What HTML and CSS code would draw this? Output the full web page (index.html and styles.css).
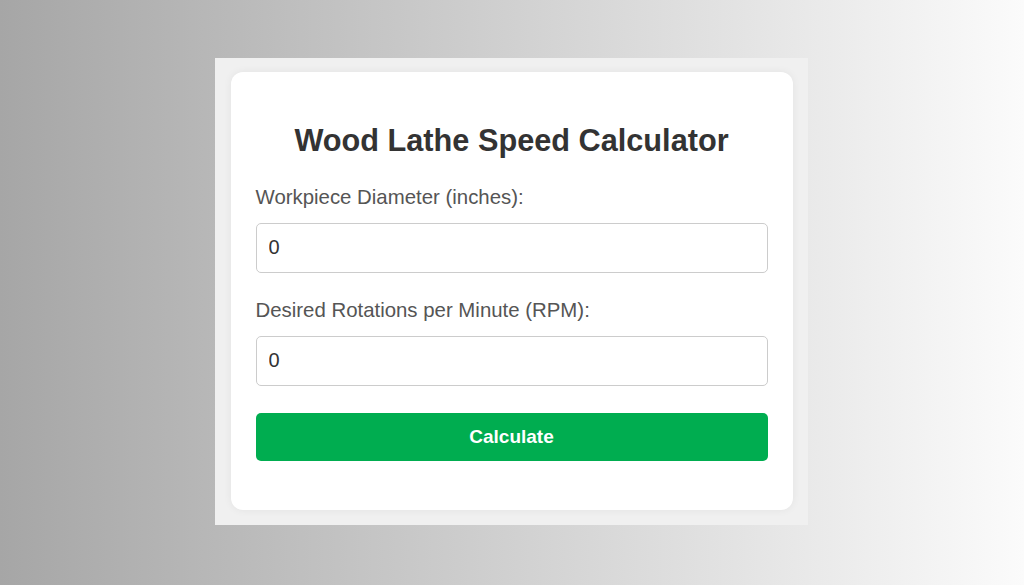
FILE: index.html
```html
<!DOCTYPE html>
<html lang="en">
<head>
    <meta charset="UTF-8">
    <meta name="viewport" content="width=device-width, initial-scale=1.0">
    <title>Wood Lathe Speed Calculator</title>
    <link rel="stylesheet" href="styles.css">
</head>
<body>
<div class="frame">
    <div class="calculator">
        <h1>Wood Lathe Speed Calculator</h1>

        <div class="form-group">
            <label for="diameter">Workpiece Diameter (inches):</label>
            <input type="number" id="diameter" value="0">
        </div>

        <div class="form-group">
            <label for="rpm">Desired Rotations per Minute (RPM):</label>
            <input type="number" id="rpm" value="0">
        </div>

        <button id="calcBtn" class="calc-btn">Calculate</button>
        <div id="result" class="result"></div>
    </div>
</div>

<script>
    document.getElementById('calcBtn').addEventListener('click', () => {
        const diameter = parseFloat(document.getElementById('diameter').value) || 0;
        const rpm = parseFloat(document.getElementById('rpm').value) || 0;
        // surface speed in feet per minute
        const sfm = Math.PI * diameter * rpm / 12;
        document.getElementById('result').textContent = `Surface speed: ${sfm.toFixed(1)} ft/min`;
    });
</script>
</body>
</html>
```

FILE: styles.css
```css
html, body {
    height: 100%;
}

body {
    margin: 0;
    font-family: "Liberation Sans", Arial, sans-serif;
    background: linear-gradient(to right, #a6a6a6, #fbfbfb);
    display: flex;
    align-items: center;
    justify-content: center;
}

.frame {
    background-color: #f0f0f0;
    padding: 14px 15px 15px 16px;
    margin: 0 2px 3px 0;
}

.calculator {
    width: 512px;
    padding: 25px;
    background-color: white;
    border-radius: 12px;
    box-shadow: 0 0 8px rgba(0, 0, 0, 0.06);
}

h1 {
    margin: 26px 0 26px;
    font-size: 30.7px;
    line-height: 36px;
    text-align: center;
    color: #333;
}

.form-group {
    margin-bottom: 25px;
}

label {
    display: block;
    margin-bottom: 14px;
    font-size: 20.4px;
    line-height: 24px;
    color: #555;
}

input {
    width: 100%;
    height: 50px;
    padding: 0 12px;
    border: 1px solid #ccc;
    border-radius: 5px;
    box-sizing: border-box;
    font-family: inherit;
    font-size: 20px;
    color: #333;
}

.calc-btn {
    width: 100%;
    height: 48px;
    margin-top: 2px;
    margin-bottom: 24px;
    border: none;
    border-radius: 5px;
    background-color: #00ad50;
    color: white;
    font-family: inherit;
    font-size: 19px;
    font-weight: bold;
    cursor: pointer;
}

.result:empty {
    display: none;
}

.result {
    font-size: 18px;
    color: #333;
    text-align: center;
}
```
